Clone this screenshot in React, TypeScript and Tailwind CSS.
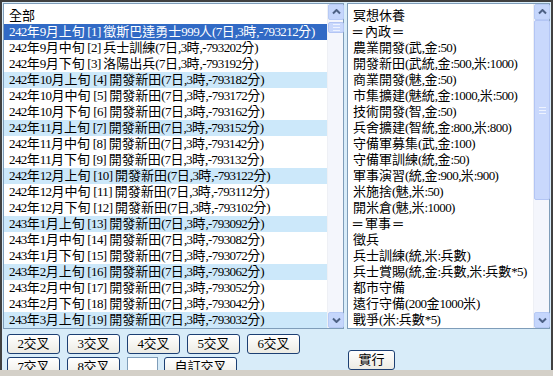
import React from "react";

const XUN = ["上", "中", "下"];

const plans = ["徵斯巴達勇士999人", "兵士訓練", "洛陽出兵"];

// 排程清單：每一旬一筆
const schedule = Array.from({ length: 19 }, (_, i) => {
  const n = i + 1;
  let month = 9 + Math.floor(i / 3);
  let year = 242;
  if (month > 12) {
    month -= 12;
    year = 243;
  }
  const name = plans[i] ?? "開發新田";
  return {
    n,
    text: `${year}年${month}月${XUN[i % 3]}旬 [${n}] ${name}(7日,3時,-${793212 - i * 10}分)`,
  };
});

const actions = [
  "冥想休養",
  "═ 內政 ═",
  "農業開發(武,金:50)",
  "開發新田(武統,金:500,米:1000)",
  "商業開發(魅,金:50)",
  "市集擴建(魅統,金:1000,米:500)",
  "技術開發(智,金:50)",
  "兵舍擴建(智統,金:800,米:800)",
  "守備軍募集(武,金:100)",
  "守備軍訓練(統,金:50)",
  "軍事演習(統,金:900,米:900)",
  "米施捨(魅,米:50)",
  "開米倉(魅,米:1000)",
  "═ 軍事 ═",
  "徵兵",
  "兵士訓練(統,米:兵數)",
  "兵士賞賜(統,金:兵數,米:兵數*5)",
  "都市守備",
  "遠行守備(200金1000米)",
  "戰爭(米:兵數*5)",
];

// 半形字擠一點，比較像細明體
const Mix = ({ text }: { text: string }) => (
  <>
    {text.split(/([\u2500-\u257f\u3000-\u9fff\uff00-\uffef]+)/).map((part, i) =>
      i % 2 === 1 ? (
        <span key={i}>{part}</span>
      ) : (
        <span key={i} className="tracking-[-0.6px]">
          {part}
        </span>
      )
    )}
  </>
);

const Arrow = ({ down }: { down?: boolean }) => (
  <div className="h-[16px] w-[16px] rounded-[2px] border border-[#b7caf5] bg-[#c5d6fc] flex items-center justify-center">
    <svg width="9" height="6" viewBox="0 0 9 6">
      <path
        d={down ? "M1 1.5 L4.5 5 L8 1.5" : "M1 4.5 L4.5 1 L8 4.5"}
        stroke="#4d6185"
        strokeWidth="2"
        fill="none"
      />
    </svg>
  </div>
);

const ScrollBar = ({ thumbTop, thumbH }: { thumbTop: number; thumbH: number }) => (
  <div className="w-[16px] h-full flex flex-col bg-[#f4f6fc] border-l border-[#eef0f5]">
    <Arrow />
    <div className="flex-1 relative">
      <div
        className="absolute left-0 w-[16px] rounded-[2px] border border-[#b3c5f4] bg-[#c9d8fc] flex flex-col items-center justify-center gap-[2px]"
        style={{ top: thumbTop, height: thumbH }}
      >
        <div className="w-[7px] h-px bg-[#eef3ff]" />
        <div className="w-[7px] h-px bg-[#eef3ff]" />
        <div className="w-[7px] h-px bg-[#eef3ff]" />
      </div>
    </div>
    <Arrow down />
  </div>
);

const Btn = ({ label, w }: { label: string; w: string }) => (
  <button
    className={`${w} h-[20px] rounded-[3px] border border-[#1c3f73] bg-gradient-to-b from-white to-[#ecebe4] text-[13px] leading-[18px] text-black`}
  >
    <Mix text={label} />
  </button>
);

export default function App() {
  return (
    <div className="w-[553px] h-[376px] overflow-hidden bg-[#d4d0c8] font-['Liberation_Serif','Noto_Sans_CJK_TC',serif] text-black">
      <div className="h-[370px] bg-[#d8ecf9] border-t-2 border-l-2 border-r-2 border-[#404040] overflow-hidden">
        <div className="flex gap-[3px] mt-[1px] ml-[1px]">
          {/* 左：排程清單 */}
          <div className="w-[341px] h-[326px] border border-[#7f9db9] bg-white flex">
            <div className="flex-1 overflow-hidden pt-[4px] text-[13px]">
              <div className="h-[16px] leading-[16px] pl-[5px] whitespace-nowrap">全部</div>
              {schedule.map((r) => (
                <div
                  key={r.n}
                  className={`h-[16px] leading-[16px] pl-[5px] whitespace-nowrap ${
                    r.n === 1
                      ? "bg-[#316ac5] text-white"
                      : r.n % 3 === 1
                      ? "bg-[#cce8fa]"
                      : ""
                  }`}
                >
                  <Mix text={r.text} />
                </div>
              ))}
            </div>
            <ScrollBar thumbTop={2} thumbH={11} />
          </div>

          {/* 右：行動清單 */}
          <div className="w-[203px] h-[326px] border border-[#7f9db9] bg-white flex">
            <div className="flex-1 overflow-hidden pt-[4px] text-[13px]">
              {actions.map((a) => (
                <div key={a} className="h-[16px] leading-[16px] pl-[5px] whitespace-nowrap">
                  <Mix text={a} />
                </div>
              ))}
            </div>
            <ScrollBar thumbTop={0} thumbH={180} />
          </div>
        </div>

        <div className="flex mt-[5px]">
          <div className="w-[343px] pl-[5px] flex flex-col gap-[3px]">
            <div className="flex gap-[7px]">
              <Btn label="2交叉" w="w-[53px]" />
              <Btn label="3交叉" w="w-[53px]" />
              <Btn label="4交叉" w="w-[53px]" />
              <Btn label="5交叉" w="w-[53px]" />
              <Btn label="6交叉" w="w-[53px]" />
            </div>
            <div className="flex gap-[7px]">
              <Btn label="7交叉" w="w-[53px]" />
              <Btn label="8交叉" w="w-[53px]" />
              <input className="w-[31px] h-[20px] bg-white border border-[#7f9db9] -mr-[1px]" />
              <Btn label="自訂交叉" w="w-[73px]" />
            </div>
          </div>
          <div className="pl-[3px] pt-[13px]">
            <Btn label="實行" w="w-[47px]" />
          </div>
        </div>
      </div>
    </div>
  );
}
